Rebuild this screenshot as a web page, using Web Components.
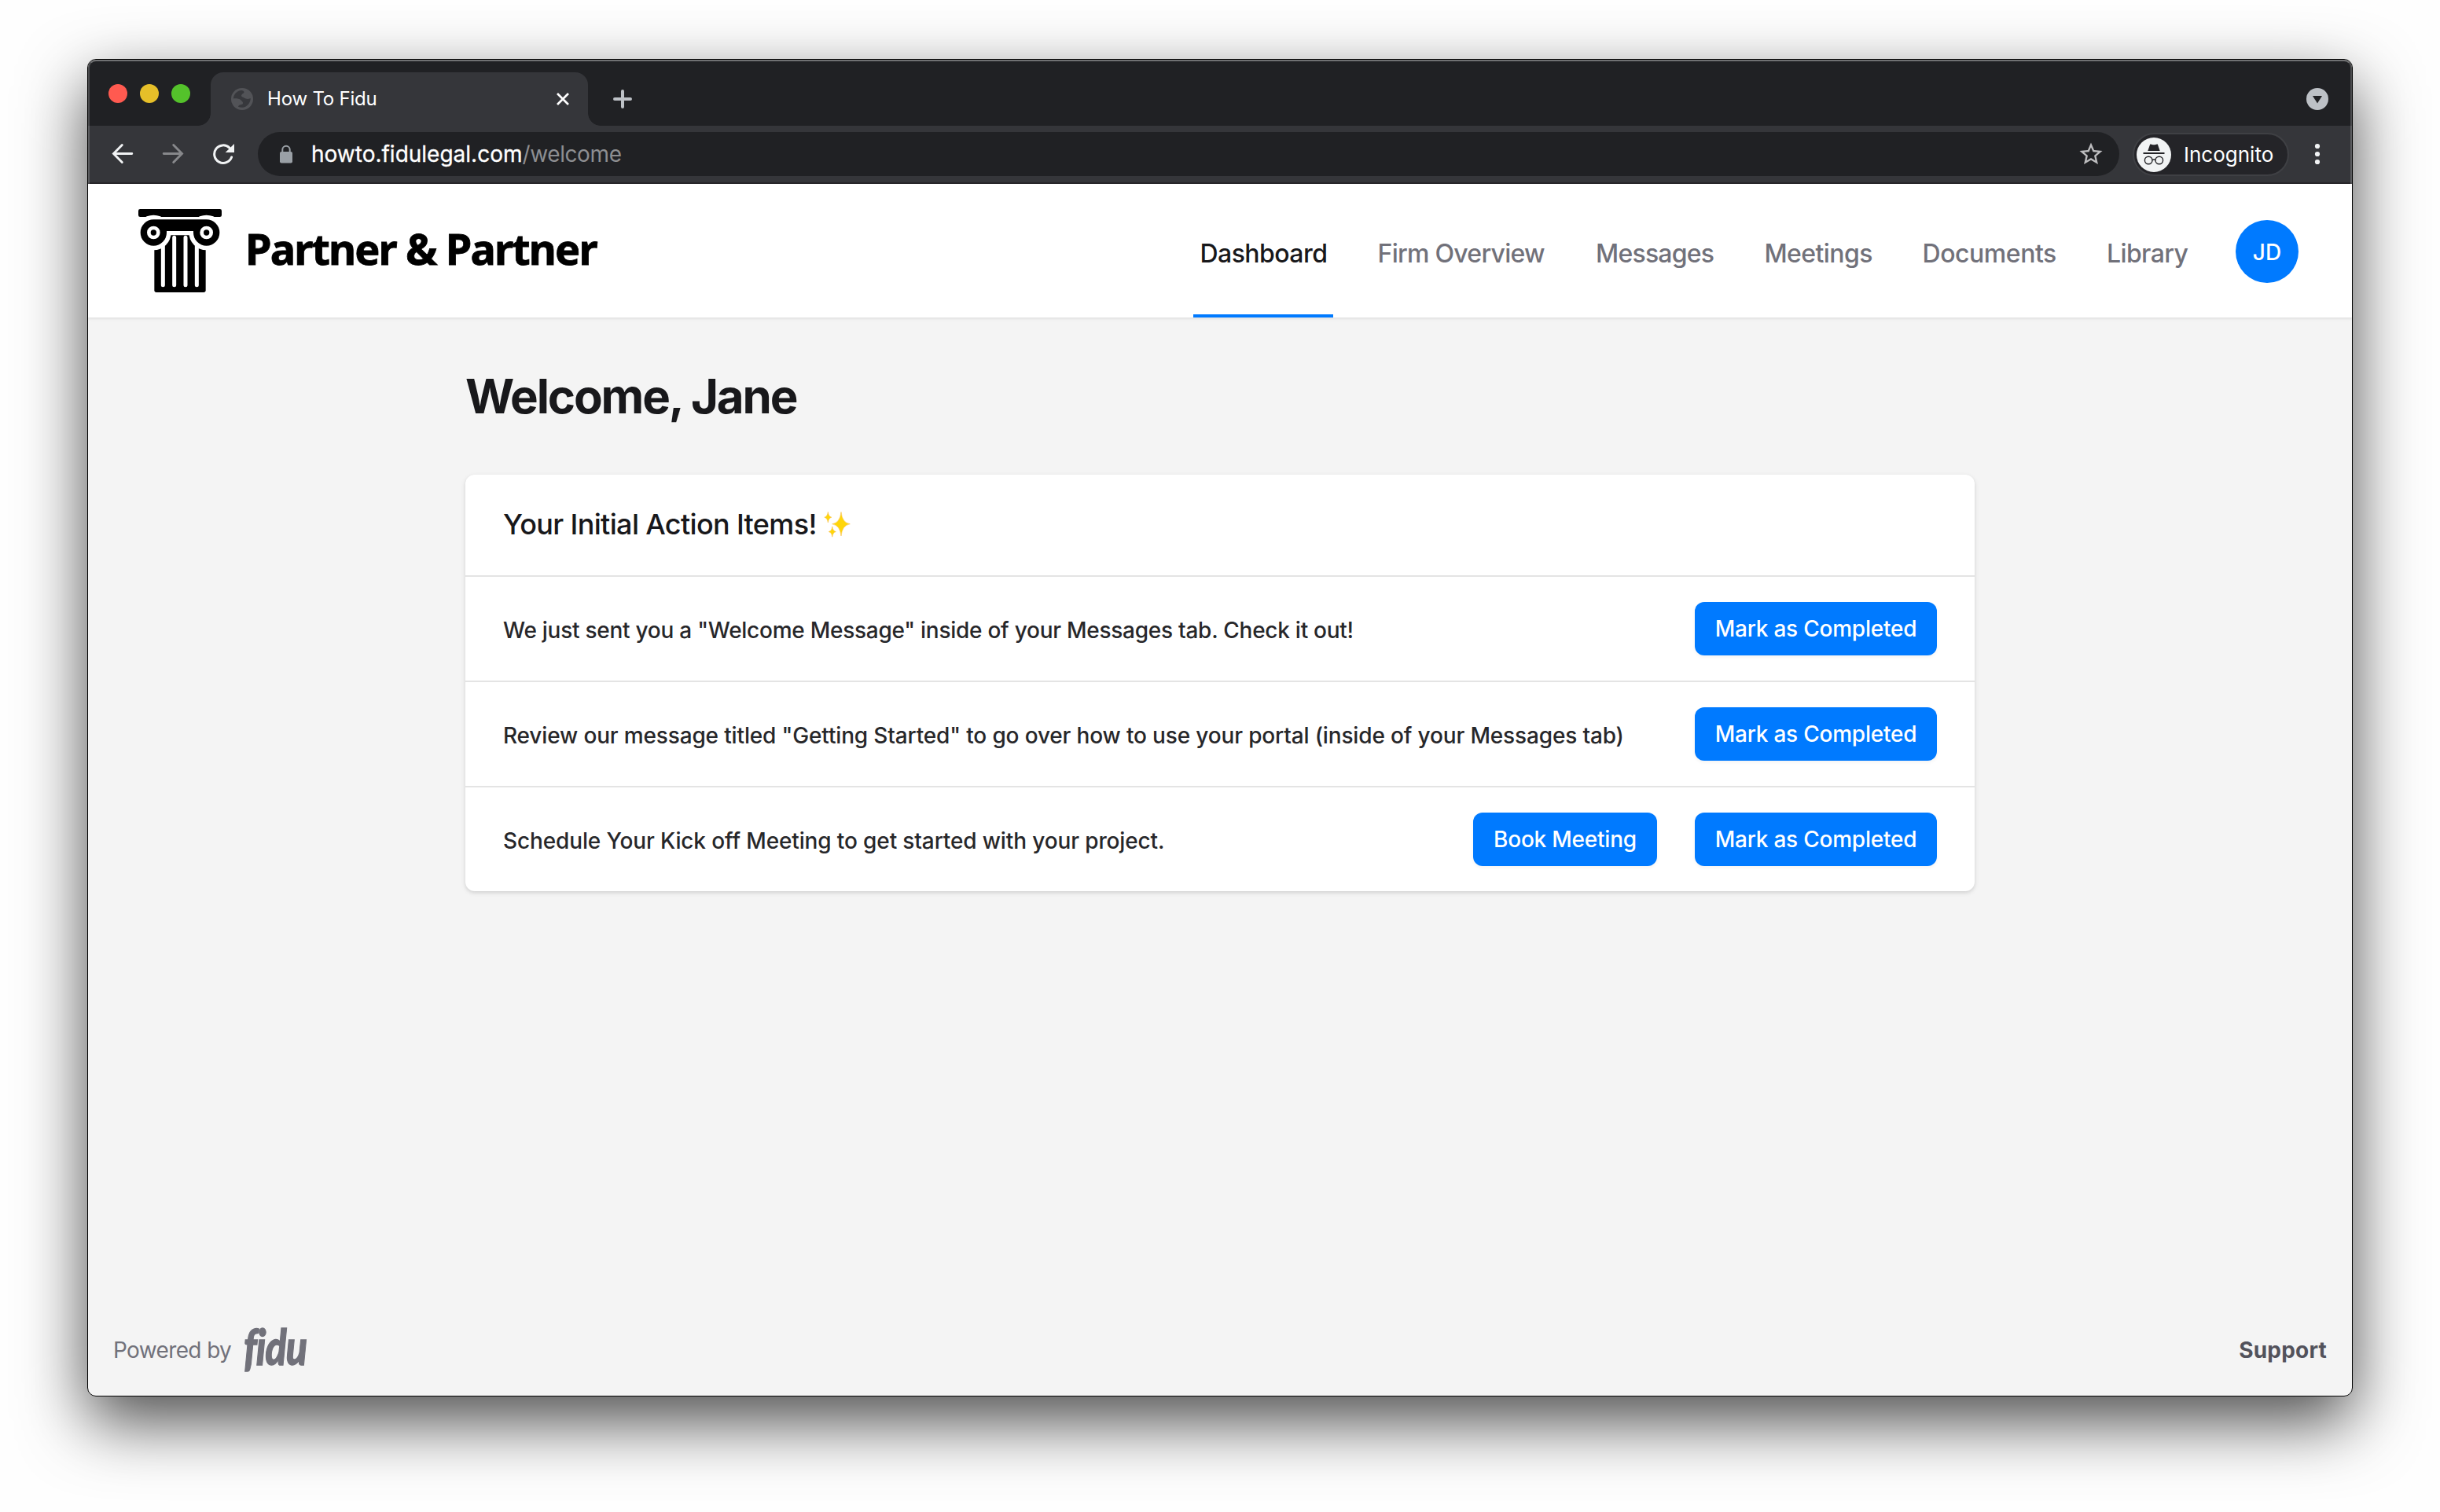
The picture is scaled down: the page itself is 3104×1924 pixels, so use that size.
<!DOCTYPE html>
<html lang="en">
<head>
<meta charset="utf-8">
<title>How To Fidu</title>
<style>
html,body{margin:0;background:#fefefe}
body{font-family:Inter,"Liberation Sans",sans-serif;height:1924px;overflow:hidden}
</style>
</head>
<body>
<browser-window>
  <tab-strip slot="chrome" label="How To Fidu"></tab-strip>
  <tool-bar slot="chrome" domain="howto.fidulegal.com" path="/welcome"></tool-bar>
  <site-header>
    <firm-logo slot="logo">Partner &amp; Partner</firm-logo>
    <nav-item active style="--w:178px;--ls:-.55px">Dashboard</nav-item>
    <nav-item style="--w:229.5px;--ls:-.73px">Firm Overview</nav-item>
    <nav-item style="--w:166.5px;--ls:-.78px">Messages</nav-item>
    <nav-item style="--w:153px;--ls:-.6px">Meetings</nav-item>
    <nav-item style="--w:186.5px;--ls:-.45px">Documents</nav-item>
    <nav-item style="--w:120.5px;--ls:-.62px">Library</nav-item>
    <user-avatar slot="user">JD</user-avatar>
  </site-header>
  <page-main heading="Welcome, Jane">
    <action-card heading="Your Initial Action Items!">
      <action-item style="--ls:-.26px">We just sent you a "Welcome Message" inside of your Messages tab. Check it out!
        <blue-button slot="actions">Mark as Completed</blue-button></action-item>
      <action-item style="--ls:-.155px">Review our message titled "Getting Started" to go over how to use your portal (inside of your Messages tab)
        <blue-button slot="actions">Mark as Completed</blue-button></action-item>
      <action-item style="--ls:-.13px">Schedule Your Kick off Meeting to get started with your project.
        <blue-button slot="actions" style="--w:234px">Book Meeting</blue-button>
        <blue-button slot="actions">Mark as Completed</blue-button></action-item>
    </action-card>
  </page-main>
  <site-footer></site-footer>
</browser-window>

<script>
const define = (name, html) => customElements.define(name, class extends HTMLElement {
  constructor() {
    super();
    this.attachShadow({ mode: 'open' });
  }
  connectedCallback() {
    this.shadowRoot.innerHTML = html.replace(/\{(\w+)\}/g, (m, key) => this.getAttribute(key) || '');
  }
});

define('browser-window', `<style>
:host{display:block;padding:75px 111px 0}
.frame{box-sizing:border-box;height:1702px;border:1px solid #000;border-radius:11px;background:#f4f4f4;overflow:hidden;display:flex;flex-direction:column}
.shadow{border-radius:12px;box-shadow:0 32px 84px rgba(0,0,0,.7)}
.chrome{position:relative;height:158px;flex:none;display:flex;flex-direction:column}
.chrome::after{content:"";position:absolute;inset:0;border:2px solid rgba(255,255,255,.2);border-top-color:rgba(255,255,255,.36);border-bottom:0;border-radius:10px 10px 0 0;pointer-events:none}
</style><div class="shadow"><div class="frame"><div class="chrome"><slot name="chrome"></slot></div><slot></slot></div></div>`);

define('tab-strip', `<style>
:host{display:flex;height:84px;background:#202124;align-items:flex-end;flex:none}
.lights{display:flex;gap:16px;padding-left:26px;width:114px;height:84px;align-items:center}
.lights i{width:24px;height:24px;border-radius:50%;margin-top:2px;flex:none}
.flare{width:16px;height:16px;flex:none}
.l{background:radial-gradient(circle at 0 0,transparent 15.5px,#35363a 16.2px)}
.r{background:radial-gradient(circle at 100% 0,transparent 15.5px,#35363a 16.2px)}
.tab{width:480px;height:68px;background:#35363a;border-radius:16px 16px 0 0;display:flex;align-items:center;box-sizing:border-box;padding:0 24px 0 26px;color:#fff;flex:none}
.tab span{font-size:24px;letter-spacing:-.2px;line-height:28px;padding:0 0 0 18px;flex:1}
svg{display:block;flex:none}
.plus{margin:0 0 20px 14px}
.menu{margin:0 30px 20px auto}
</style>
<div class="lights"><i style="background:#ff5a50"></i><i style="background:#e6bf29"></i><i style="background:#54c22b"></i></div>
<div class="flare l"></div>
<div class="tab"><svg width="28" height="28" viewBox="0 0 28 28"><circle cx="14" cy="14" r="14" fill="#525357"/><path d="M2.9 13.4C3.2 8 7.600 3.600 13 3.100C15 3 16.500 4 16.500 5.500C16 7 14.500 7 13.500 8.500C12 10.500 14.500 11.500 16.500 12.500C19 14 21 14.500 24.700 13C25 17 22 22.500 17 24.300C14 25.200 11.500 25 9 23.800C9.500 21 13 21.500 14.500 20.500C16 18.500 14 17 12.500 15.500C10.500 13.500 7 13.200 2.900 13.400Z" fill="#37383c"/></svg><span>{label}</span><svg width="16" height="16" viewBox="0 0 16 16" fill="none" stroke="#fff" stroke-width="2.700"><path d="M1 1L15 15M15 1L1 15"/></svg></div>
<div class="flare r"></div>
<svg class="plus" width="28" height="28" viewBox="0 0 28 28" stroke="#bdc1c6" stroke-width="4" stroke-linecap="round"><path d="M4 14H24M14 4V24"/></svg>
<svg class="menu" width="28" height="28" viewBox="0 0 28 28"><circle cx="14" cy="14" r="14" fill="#bdc1c6"/><path d="M8 10H20L14 19.500Z" fill="#202124"/></svg>`);

define('tool-bar', `<style>
:host{display:flex;height:74px;box-sizing:border-box;background:#35363a;border-bottom:2px solid #28272b;align-items:center;padding:0 0 0 30px;flex:none}
svg{display:block;flex:none}
.nav{display:flex;gap:36px;margin-right:30px}
.omni{width:2368px;height:56px;border-radius:28px;background:#202124;display:flex;align-items:center;box-sizing:border-box;padding:0 20px 0 26px;font-size:28px;line-height:34px;color:#fff}
.url{padding-left:22px;flex:1}
.url b{font-weight:400;-webkit-text-stroke:.3px #fff;letter-spacing:0}
.url span{color:#8d8e91;letter-spacing:-.4px}
.pill{margin-left:17px;width:199px;height:55px;box-sizing:border-box;border:2px solid #3f4044;border-radius:28px;background:#242428;display:flex;align-items:center;padding:1px 0 0 3px;color:#fff;font-size:26px;line-height:32px}
.pill span{padding-left:16px}
.dots{margin-left:32px}
</style>
<div class="nav">
<svg width="28" height="28" viewBox="0 0 28 28" fill="none" stroke="#f1f3f4" stroke-width="2.900" stroke-linecap="round"><path d="M25.800 13.500H3M13.300 2.500L2.500 13.500L13.300 24.500"/></svg>
<svg width="28" height="28" viewBox="0 0 28 28" fill="none" stroke="#87888b" stroke-width="2.900" stroke-linecap="round"><path d="M2.200 13.500H25M14.700 2.500L25.500 13.500L14.700 24.500"/></svg>
<svg width="28" height="28" viewBox="0 0 28 28"><path d="M21.900 6.100A11.300 11.300 0 1 0 24.600 18" fill="none" stroke="#f1f3f4" stroke-width="3" stroke-linecap="round"/><path d="M28 1V12H16.700Z" fill="#f1f3f4"/></svg>
</div>
<div class="omni"><svg width="20" height="28" viewBox="0 0 20 28"><path d="M5.300 12V8.500a4.700 4.700 0 0 1 9.400 0V12" fill="none" stroke="#9aa0a6" stroke-width="2"/><rect x="2" y="11" width="16" height="14.500" rx="2" fill="#9aa0a6"/></svg><div class="url"><b>{domain}</b><span>{path}</span></div>
<svg width="32" height="32" viewBox="0 0 24 24"><path transform="translate(12 12) scale(1.09) translate(-12 -12)" fill="#bdbdbf" d="M22 9.240l-7.190-.620L12 2 9.190 8.630 2 9.240l5.460 4.730L5.820 21 12 17.270 18.180 21l-1.630-7.030L22 9.240zM12 15.400l-3.760 2.270 1-4.280-3.320-2.880 4.380-.380L12 6.100l1.710 4.040 4.380.380-3.320 2.880 1 4.280L12 15.400z"/></svg></div>
<div class="pill"><svg width="44" height="44" viewBox="0 0 44 44"><circle cx="22" cy="22" r="22" fill="#f1f3f4"/><path d="M17.200 8.500C19 8 20 9.300 22 9.300S25 8 26.800 8.500L29.700 17H14.300Z" fill="#242428"/><path d="M8.500 20H35.500" stroke="#242428" stroke-width="1.800"/><g fill="none" stroke="#242428" stroke-width="1.400"><circle cx="15.200" cy="29" r="4.800"/><circle cx="28.800" cy="29" r="4.800"/><path d="M20 28.600Q22 27.400 24 28.600"/></g></svg><span>Incognito</span></div>
<svg class="dots" width="8" height="28" viewBox="0 0 8 28" fill="#f1f3f4"><circle cx="4" cy="4" r="3.100"/><circle cx="4" cy="14" r="3.100"/><circle cx="4" cy="24" r="3.100"/></svg>`);

define('site-header', `<style>
:host{display:flex;height:170px;box-sizing:border-box;background:#fff;align-items:center;padding:0 68px 0 64px;box-shadow:0 2px 2px rgba(0,0,0,.04),0 1px 6px rgba(0,0,0,.06);flex:none;z-index:1}
nav{display:flex;gap:48px;height:170px;margin-left:auto;margin-right:52px}
</style><slot name="logo"></slot><nav><slot></slot></nav><slot name="user"></slot>`);

define('firm-logo', `<style>
:host{display:flex;align-items:center;gap:30px;color:#000;font:700 54px/70px "Noto Sans","Open Sans",sans-serif;letter-spacing:-1.87px}
svg{display:block}span{padding-bottom:6px;-webkit-text-stroke:.8px #000}
</style><svg width="106" height="106" viewBox="18 18 318 318"><rect x="18" y="18" width="318" height="30" rx="7"/><path d="M79 118H275V328Q275 336 267 336H87Q79 336 79 328Z"/><g fill="#fff"><circle cx="76" cy="108" r="67"/><circle cx="278" cy="108" r="67"/></g><g stroke="#fff" stroke-width="15" stroke-linecap="round"><path d="M112 120V308M155 127V308M198 127V308M241 120V308"/></g><path d="M76 58H278A50 50 0 1 1 228 108L228 102H126L126 108A50 50 0 1 1 76 58Z"/><g fill="#fff"><circle cx="76" cy="108" r="25"/><circle cx="278" cy="108" r="25"/></g><circle cx="76" cy="108" r="11"/><circle cx="278" cy="108" r="11"/></svg><span><slot></slot></span>`);

define('nav-item', `<style>
:host{display:flex;align-items:center;box-sizing:border-box;width:var(--w);height:170px;padding:8px 0 0 8.500px;font-size:32px;line-height:40px;font-weight:500;letter-spacing:var(--ls);color:#71717a;white-space:nowrap}
:host([active]){color:#18181b;box-shadow:inset 0 -4px #007aff}
</style><slot></slot>`);

define('user-avatar', `<style>
:host{display:flex;align-items:center;justify-content:center;width:80px;height:80px;box-sizing:border-box;padding-top:1px;border-radius:50%;background:#007aff;color:#fff;font-weight:500;font-size:28px;line-height:34px;margin-top:2px}
</style><slot></slot>`);

define('page-main', `<style>
:host{display:flex;flex-direction:column;align-items:center;flex:1}
div{width:1920px;padding-top:64px}
h1{margin:0 0 64px;font-size:60px;line-height:72px;font-weight:700;letter-spacing:-2.15px;color:#18181b}
</style><div><h1>{heading}</h1><slot></slot></div>`);

define('action-card', `<style>
:host{display:block;background:#fff;border-radius:12px;box-shadow:0 2px 6px rgba(0,0,0,.1),0 2px 4px rgba(0,0,0,.06)}
header{display:flex;align-items:center;gap:9px;height:128px;padding:0 48px;box-sizing:border-box}
h2{margin:0;padding-bottom:3px;font-size:36px;line-height:44px;font-weight:500;letter-spacing:-.66px;color:#18181b}
svg{display:block;margin-top:-2px}
</style><header><h2>{heading}</h2><svg width="34" height="34" viewBox="0 0 34 34"><g fill="#ffd60a" stroke="#f9c04a" stroke-width=".6"><path d="M22 1.500Q23.300 15.200 33.300 16.800Q23.300 18.400 22 32Q20.700 18.400 10.700 16.800Q20.700 15.200 22 1.500Z"/><path d="M5.300 1.500Q6 7.200 9.800 8.200Q6 9.200 5.300 15Q4.600 9.200 .8 8.200Q4.600 7.200 5.300 1.500Z"/><path d="M10.800 20Q11.500 25.600 15.300 26.600Q11.500 27.600 10.800 33.200Q10.100 27.600 6.300 26.600Q10.100 25.600 10.800 20Z"/></g></svg></header><slot></slot>`);

define('action-item', `<style>
:host{display:flex;align-items:center;gap:48px;height:134px;box-sizing:border-box;border-top:2px solid #e4e4e4;padding:0 48px;font-size:28px;line-height:36px;font-weight:500;color:#27272a;letter-spacing:var(--ls)}
span{flex:1;padding-top:3px;white-space:nowrap}
</style><span><slot></slot></span><slot name="actions"></slot>`);

define('blue-button', `<style>
:host{display:flex;align-items:center;justify-content:center;box-sizing:border-box;width:var(--w,308px);height:68px;border-radius:12px;background:#007aff;color:#fff;font-size:28px;line-height:34px;font-weight:500;letter-spacing:-.22px;box-shadow:0 2px 4px rgba(0,0,0,.05);white-space:nowrap}
</style><slot></slot>`);

define('site-footer', `<style>
:host{display:flex;align-items:center;justify-content:space-between;height:68px;padding:0 32px;margin-bottom:24px;font-size:28px;line-height:34px;color:#71717a;flex:none}
div{display:flex;align-items:center}
.p{letter-spacing:-.63px}
.fidu{font:italic 900 56px/56px Lato,sans-serif;letter-spacing:-1px;margin:0 0 6px 16px;-webkit-text-stroke:1.200px #71717a;transform-origin:0 80%;transform:scale(.89,1.13)}
b{font-weight:700;letter-spacing:.2px;color:#52525b}
</style><div><span class="p">Powered by</span><span class="fidu">fidu</span></div><b>Support</b>`);
</script>
</body>
</html>
